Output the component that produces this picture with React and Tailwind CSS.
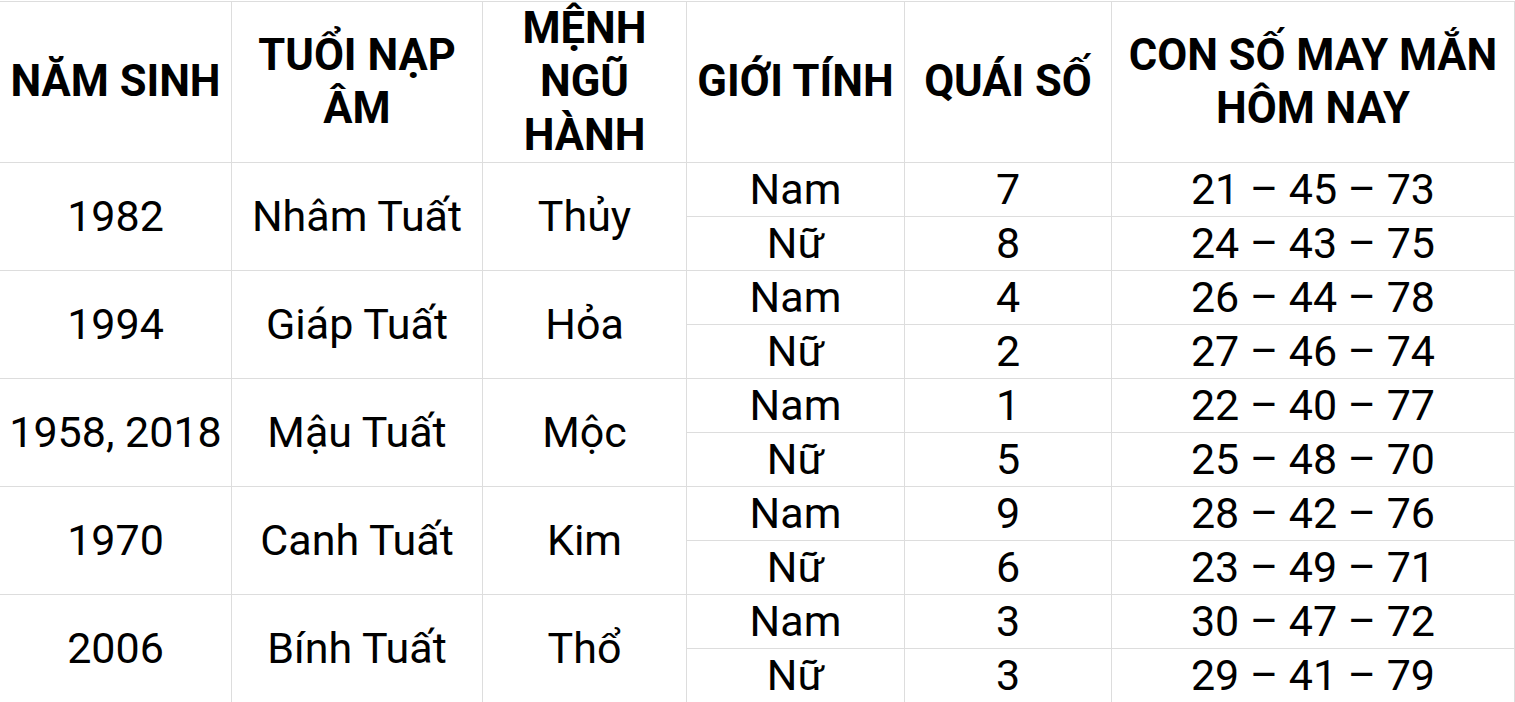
import React from "react";

const data = [
  { year: "1982", tuoi: "Nhâm Tuất", menh: "Thủy", rows: [["Nam", "7", "21 – 45 – 73"], ["Nữ", "8", "24 – 43 – 75"]] },
  { year: "1994", tuoi: "Giáp Tuất", menh: "Hỏa", rows: [["Nam", "4", "26 – 44 – 78"], ["Nữ", "2", "27 – 46 – 74"]] },
  { year: "1958, 2018", tuoi: "Mậu Tuất", menh: "Mộc", rows: [["Nam", "1", "22 – 40 – 77"], ["Nữ", "5", "25 – 48 – 70"]] },
  { year: "1970", tuoi: "Canh Tuất", menh: "Kim", rows: [["Nam", "9", "28 – 42 – 76"], ["Nữ", "6", "23 – 49 – 71"]] },
  { year: "2006", tuoi: "Bính Tuất", menh: "Thổ", rows: [["Nam", "3", "30 – 47 – 72"], ["Nữ", "3", "29 – 41 – 79"]] },
];

const th = "border border-[#dddddd] text-center align-middle font-bold text-[43.5px] leading-[53.3px] p-0";
const td = "border border-[#dddddd] text-center align-middle text-[43px] leading-[53px] p-0 h-[54px]";

export default function App() {
  return (
    <div className="w-[1515px] h-[702px] overflow-hidden bg-white text-black" style={{ fontFamily: "Roboto, 'Liberation Sans', sans-serif" }}>
      <table className="border-collapse table-fixed w-[1515px] mt-px -ml-px">
        <colgroup>
          <col className="w-[232px]" />
          <col className="w-[251px]" />
          <col className="w-[204px]" />
          <col className="w-[218px]" />
          <col className="w-[207px]" />
          <col className="w-[403px]" />
        </colgroup>
        <thead>
          <tr className="h-[160px]">
            <th className={th}>NĂM SINH</th>
            <th className={th}>TUỔI NẠP<br />ÂM</th>
            <th className={th}>MỆNH<br />NGŨ<br />HÀNH</th>
            <th className={th}>GIỚI TÍNH</th>
            <th className={th}>QUÁI SỐ</th>
            <th className={th}>CON SỐ MAY MẮN<br />HÔM NAY</th>
          </tr>
        </thead>
        <tbody>
          {data.map((g) => (
            <React.Fragment key={g.year}>
              <tr>
                <td rowSpan={2} className={td}>{g.year}</td>
                <td rowSpan={2} className={td}>{g.tuoi}</td>
                <td rowSpan={2} className={td}>{g.menh}</td>
                <td className={td}>{g.rows[0][0]}</td>
                <td className={td}>{g.rows[0][1]}</td>
                <td className={td}>{g.rows[0][2]}</td>
              </tr>
              <tr>
                <td className={td}>{g.rows[1][0]}</td>
                <td className={td}>{g.rows[1][1]}</td>
                <td className={td}>{g.rows[1][2]}</td>
              </tr>
            </React.Fragment>
          ))}
        </tbody>
      </table>
    </div>
  );
}
